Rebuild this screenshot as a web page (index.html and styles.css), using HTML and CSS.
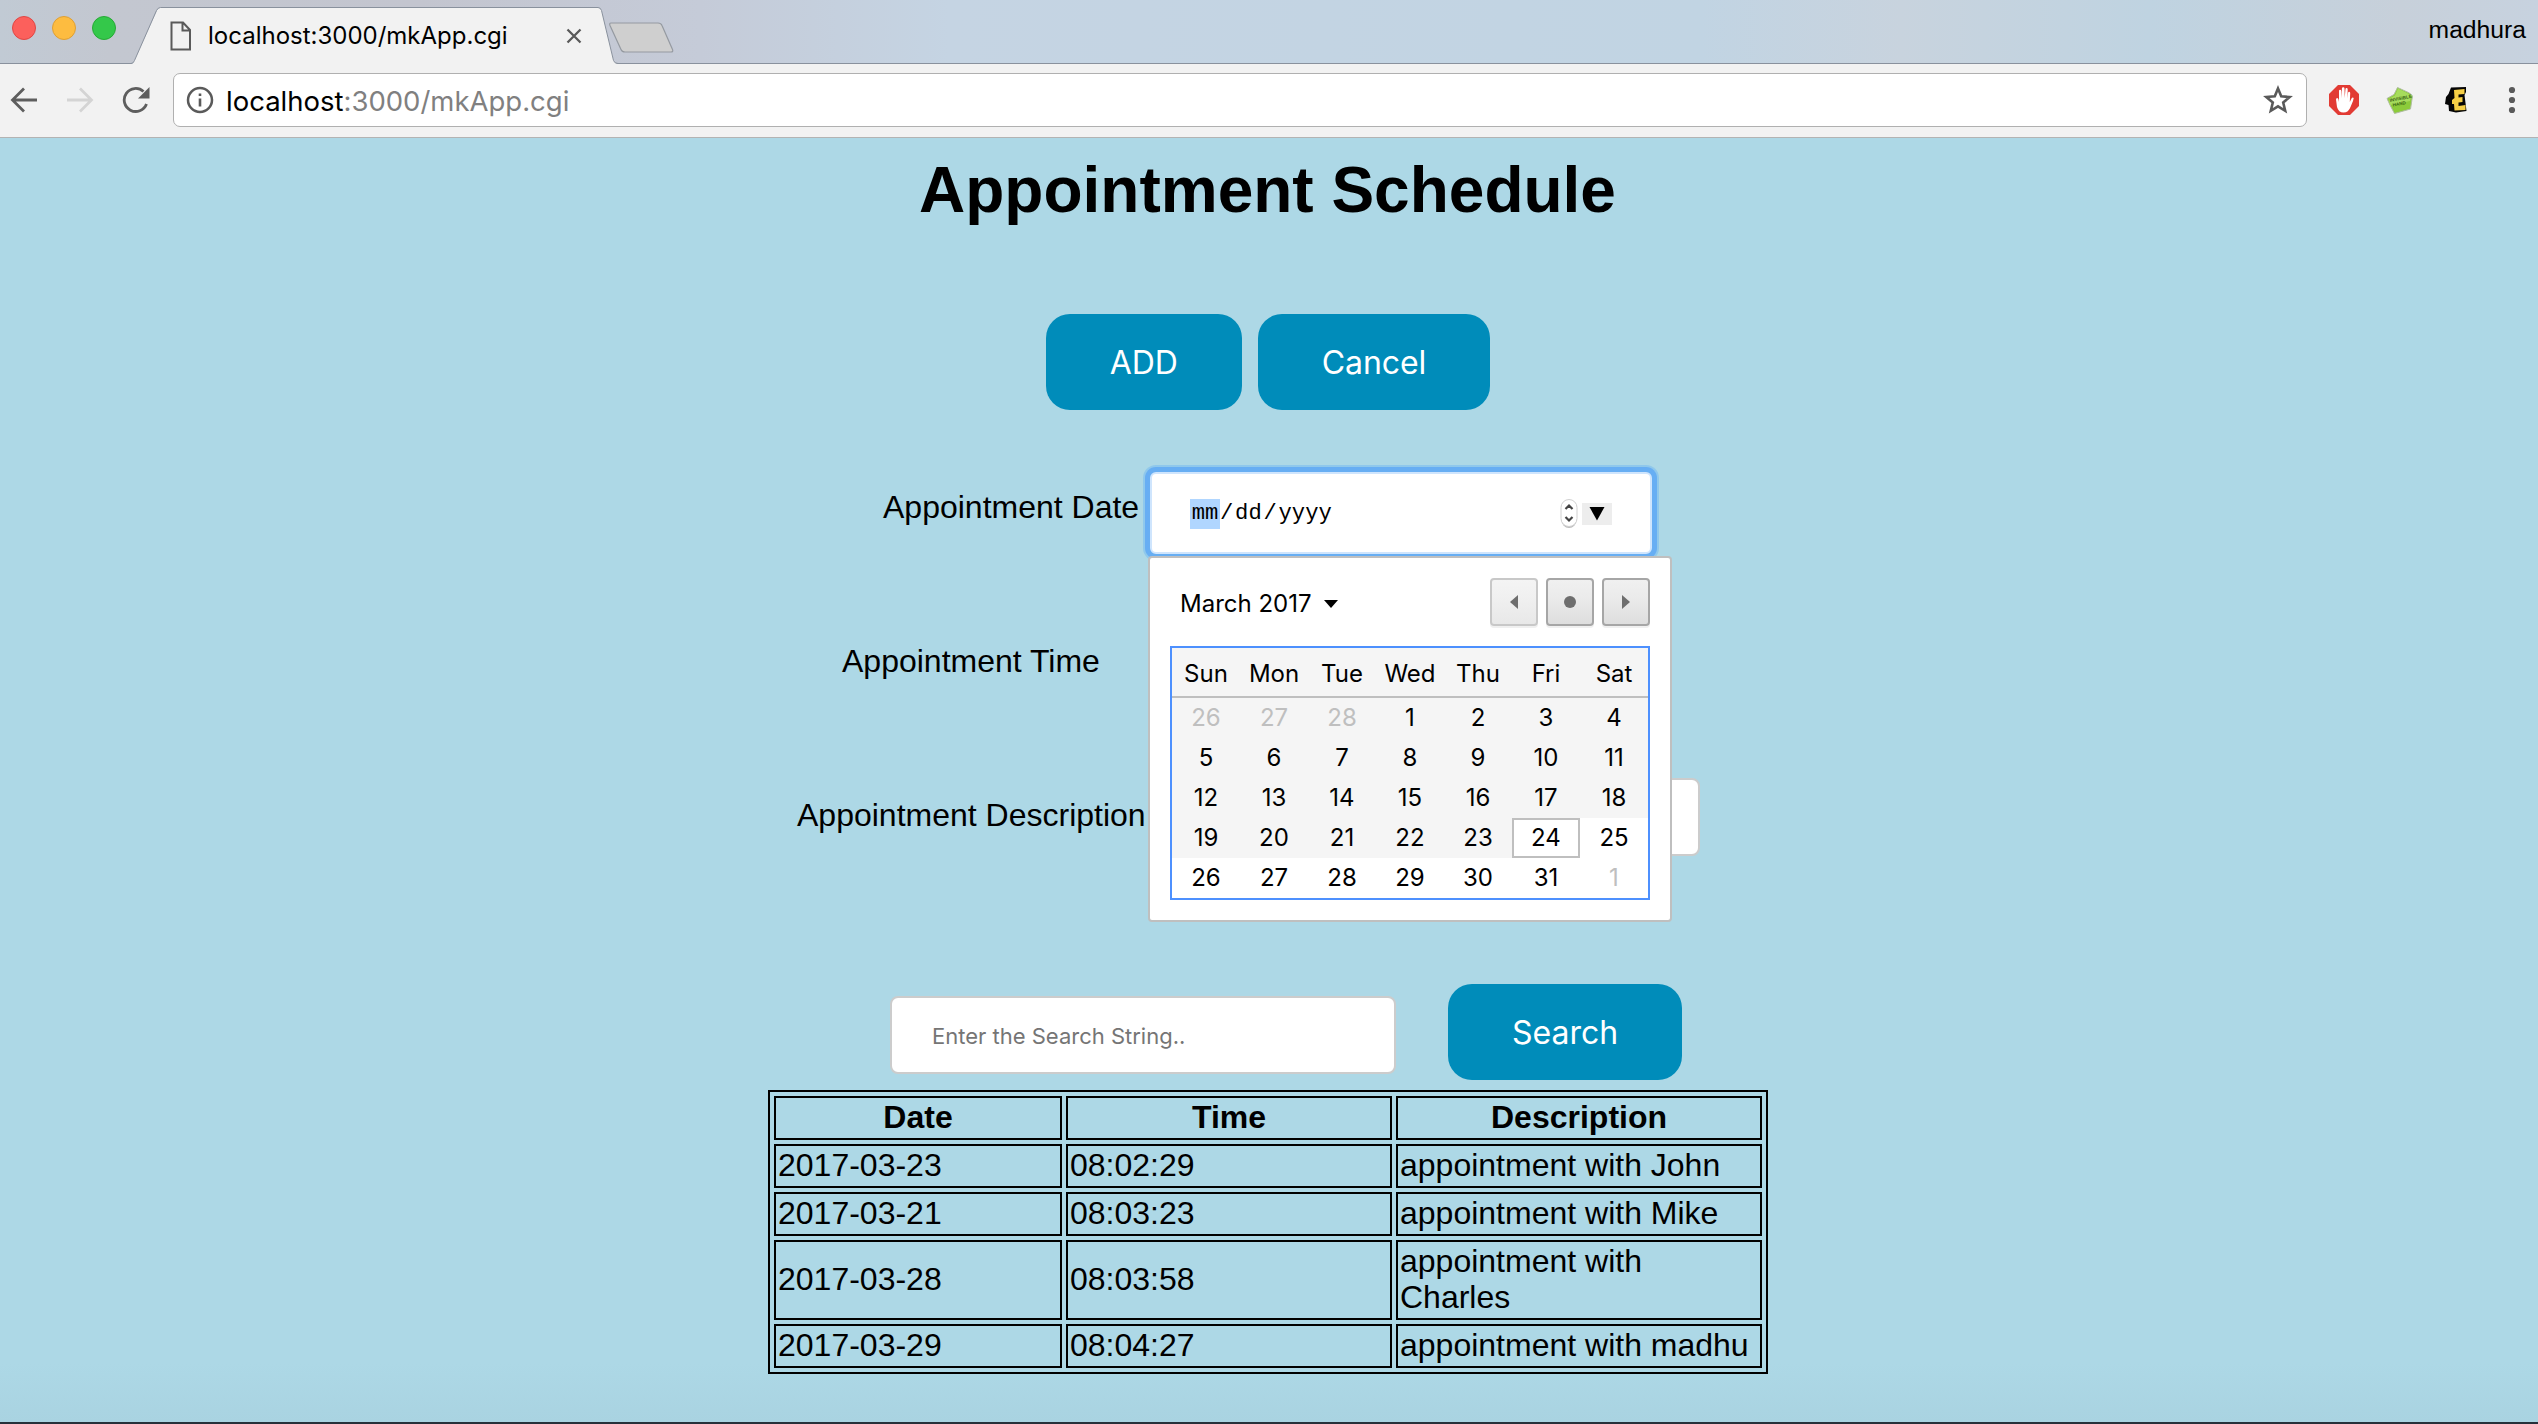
FILE: index.html
```
<!DOCTYPE html>
<html lang="en">
<head>
<meta charset="utf-8">
<title>localhost:3000/mkApp.cgi</title>
<link rel="stylesheet" href="styles.css">
</head>
<body>
<header class="browser">
  <div class="tabstrip">
    <div class="lights"><i class="light red"></i><i class="light yellow"></i><i class="light green"></i></div>
    <div class="tab">
      <svg class="tab-shape" width="488" height="64" viewBox="0 0 488 64"><path d="M0 64Q2.500 63.500 3.500 60.500L26 10.500Q27.500 7.500 30 7.500H466Q469 7.500 470.500 10.500L482.500 60Q483.500 63.500 487 64Z" fill="#f2f2f2"/><path d="M0 63.500Q2.500 63.500 3.500 60.500L25.500 10.500Q27 7.500 29.500 7.500H467Q469.500 7.500 470.500 10.500L482.500 60.500Q483.500 63.500 487 63.500" fill="none" stroke="#89919d"/></svg>
      <svg class="doc" width="22" height="30" viewBox="0 0 22 30" fill="none" stroke="#5a5a5a" stroke-width="2"><path d="M1.500 1.500H13L20 9V28.500H1.500ZM12.500 1.500V9.500H20"/></svg>
      <span class="tab-title">localhost:3000/mkApp.cgi</span>
      <svg class="close" width="16" height="16" viewBox="0 0 16 16" stroke="#5a5a5a" stroke-width="2.300"><path d="M1.500 1.500 14.500 14.500M14.500 1.500 1.500 14.500"/></svg>
    </div>
    <svg class="newtab" width="68" height="34" viewBox="0 0 68 34"><path d="M3 2H50Q53 2 54 4.500L64.500 28.500Q65.500 31 63 31H17Q14 31 13 28.500L2 4.500Q1 2 3 2Z" fill="#cfcfcf" stroke="#959aa1" stroke-width="1.200"/></svg>
    <span class="profile">madhura</span>
  </div>
  <div class="toolbar">
    <svg class="back" width="28" height="28" viewBox="0 0 28 28" fill="none" stroke="#5e5e5e" stroke-width="2.800"><path d="M27 14H3M14 2.500 2.500 14 14 25.500"/></svg>
    <svg class="forward" width="28" height="28" viewBox="0 0 28 28" fill="none" stroke="#d4d4d4" stroke-width="2.800"><path d="M1 14H25M14 2.500 25.500 14 14 25.500"/></svg>
    <svg class="reload" width="28" height="28" viewBox="0 0 28 28"><path d="M24.500 18A11.500 11.500 0 1 1 21.500 5.500" fill="none" stroke="#5e5e5e" stroke-width="2.800"/><path d="M27.500 1V12.500H16Z" fill="#5e5e5e"/></svg>
    <div class="omnibox">
      <svg width="28" height="28" viewBox="0 0 28 28"><circle cx="14" cy="14" r="12" fill="none" stroke="#5a5a5a" stroke-width="2.500"/><path d="M14 12.500V20.500M14 7.500V10" stroke="#5a5a5a" stroke-width="2.600"/></svg>
      <span class="url">localhost<span class="path">:3000/mkApp.cgi</span></span>
      <svg class="star" width="30" height="30" viewBox="0 0 30 30"><path d="M15 3.500 18.200 11.300 26.700 12 20.200 17.500 22.200 25.800 15 21.300 7.800 25.800 9.800 17.500 3.300 12 11.800 11.300Z" fill="none" stroke="#5a5a5a" stroke-width="2.600"/></svg>
    </div>
    <svg class="ext-block" width="30" height="30" viewBox="0 0 30 30"><path d="M9 0H21L30 9V21L21 30H9L0 21V9Z" fill="#e23b34"/><path d="M7 14.500Q7 13 8.200 13 9.200 13 9.500 14.500L10 17V6Q10 4.700 11.100 4.700 12.200 4.700 12.300 6L12.700 13 12.900 3.500Q13 2.200 14.200 2.200 15.400 2.200 15.500 3.500L15.700 13 16.500 4Q16.700 2.800 17.800 3 18.800 3.200 18.700 4.500L18.400 13.500 19 8Q19.300 6.500 20.300 6.700 21.300 7 21.200 8.200L20.800 17 22.500 13.500Q23.500 12 24.700 13L24 16 21.500 22Q19.500 27.500 14.500 27.500 9.500 27.500 8 22Z" fill="#fff"/></svg>
    <svg class="ext-hand" width="28" height="30" viewBox="0 0 28 30"><path d="M11.500 2.500 23.500 8 26.500 11 24.500 24 8.500 28.500 4.500 21 1 13.500 8 9.500Z" fill="#8ccb3a" stroke="#b0bda2" stroke-width="1"/><path d="M12 3.500 23 9 25 12 24 16 4 20 2.500 14 9 10.500Z" fill="#a6dc5c"/><text transform="translate(4 17) rotate(-11)" class="ext-label"><tspan x="0" y="0">INVISIBLE</tspan><tspan x="2" y="5">HAND</tspan></text></svg>
    <svg class="ext-e" width="24" height="28" viewBox="0 0 24 28"><path d="M7 1.500 22 1V6L20.500 9 22.500 25 12 26.500 5 25 4.500 19 1 18 2 11 4.500 8Z" fill="#050505"/><path d="M10 4 20.500 3V8L14.500 8.500V11.500L18.500 11V16L14.500 16.500V20L21.500 19V24L10.500 24.500 10 18H8V14L10.500 12Z" fill="#f6cf45"/></svg>
    <svg class="menu" width="8" height="28" viewBox="0 0 8 28" fill="#5a5a5a"><circle cx="4" cy="4" r="3.100"/><circle cx="4" cy="14" r="3.100"/><circle cx="4" cy="24" r="3.100"/></svg>
  </div>
</header>
<main class="page">
  <h1>Appointment Schedule</h1>
  <div class="actions"><button class="btn">ADD</button><button class="btn">Cancel</button></div>
  <form class="fields">
    <div class="field date-row">
      <label>Appointment Date</label>
      <div class="date-input">
        <span class="seg active">mm</span><span class="slash">/</span><span class="seg">dd</span><span class="slash">/</span><span class="seg">yyyy</span>
        <svg class="spinner" width="18" height="32" viewBox="0 0 18 32"><rect x="1.500" y="2.500" width="15" height="27.500" rx="7.500" fill="#bbb"/><rect x="1" y="1.500" width="16" height="27" rx="8" fill="#fff" stroke="#d0d0d0"/><path d="M5.500 11 9 7.500 12.500 11M5.500 19 9 22.500 12.500 19" fill="none" stroke="#444" stroke-width="2.200"/></svg>
        <span class="drop"><svg width="16" height="14" viewBox="0 0 16 14"><path d="M.5 0H15.500L8 13.500Z"/></svg></span>
        <div class="calendar">
          <div class="cal-head">
            <span class="month">March 2017</span>
            <svg class="caret" width="14" height="8" viewBox="0 0 14 8"><path d="M0 0H14L7 8Z"/></svg>
            <span class="nav faded"><svg width="8" height="14" viewBox="0 0 8 14"><path d="M8 0V14L0 7Z"/></svg></span>
            <span class="nav"><svg width="12" height="12" viewBox="0 0 12 12"><circle cx="6" cy="6" r="6"/></svg></span>
            <span class="nav"><svg width="8" height="14" viewBox="0 0 8 14"><path d="M0 0V14L8 7Z"/></svg></span>
          </div>
          <div class="cal-grid">
            <b>Sun</b><b>Mon</b><b>Tue</b><b>Wed</b><b>Thu</b><b>Fri</b><b>Sat</b>
            <i class="past other">26</i><i class="past other">27</i><i class="past other">28</i><i class="past">1</i><i class="past">2</i><i class="past">3</i><i class="past">4</i>
            <i class="past">5</i><i class="past">6</i><i class="past">7</i><i class="past">8</i><i class="past">9</i><i class="past">10</i><i class="past">11</i>
            <i class="past">12</i><i class="past">13</i><i class="past">14</i><i class="past">15</i><i class="past">16</i><i class="past">17</i><i class="past">18</i>
            <i class="past">19</i><i class="past">20</i><i class="past">21</i><i class="past">22</i><i class="past">23</i><i class="today">24</i><i>25</i>
            <i>26</i><i>27</i><i>28</i><i>29</i><i>30</i><i>31</i><i class="other">1</i>
          </div>
        </div>
      </div>
    </div>
    <div class="field time-row"><label>Appointment Time</label></div>
    <div class="field desc-row"><label>Appointment Description</label><div class="text-input"></div></div>
  </form>
  <div class="search">
    <input class="text-input" type="text" placeholder="Enter the Search String..">
    <button class="btn">Search</button>
  </div>
  <table class="list">
    <colgroup><col class="c-date"><col class="c-time"><col class="c-desc"></colgroup>
    <tr><th>Date</th><th>Time</th><th>Description</th></tr>
    <tr><td>2017-03-23</td><td>08:02:29</td><td>appointment with John</td></tr>
    <tr><td>2017-03-21</td><td>08:03:23</td><td>appointment with Mike</td></tr>
    <tr><td>2017-03-28</td><td>08:03:58</td><td>appointment with Charles</td></tr>
    <tr><td>2017-03-29</td><td>08:04:27</td><td>appointment with madhu</td></tr>
  </table>
</main>
</body>
</html>
```
FILE: styles.css
```
* { box-sizing: border-box; }
body {
  margin: 0;
  height: 1424px;
  overflow: hidden;
  display: flex;
  flex-direction: column;
  background: lightblue;
  color: #000;
  font: 32px/36px "Liberation Sans", Arial, sans-serif;
}
svg { display: block; flex: none; }

/* browser window chrome */
.browser { flex: none; font-family: Inter, sans-serif; }
.tabstrip {
  height: 64px;
  display: flex;
  align-items: flex-start;
  background: linear-gradient(90deg, #c1cad4 0, #c3c7d0 110px, #c3c5cf 420px, #c5cbd8 700px, #c5d4e3 950px, #c1d4e3 1700px, #c8d3de 1900px, #bfd3e1 2150px, #c7d0da 2400px, #c7d2df 2538px);
  box-shadow: inset 0 -1px #89919d;
}
.lights { display: flex; gap: 16px; padding: 16px 0 0 12px; width: 131px; }
.light { width: 24px; height: 24px; border-radius: 50%; border: 1px solid; }
.red { background: #fc605c; border-color: #df4744; }
.yellow { background: #fdbc40; border-color: #de9f34; }
.green { background: #34c84a; border-color: #27aa35; }
.tab {
  position: relative;
  width: 488px;
  height: 64px;
  display: flex;
  align-items: center;
  padding: 8px 0 0 39px;
}
.tab-shape { position: absolute; left: 0; top: 0; }
.doc, .tab-title, .close { position: relative; }
.tab-title { margin-left: 16px; width: 358px; font-size: 24px; line-height: 30px; }
.newtab { margin: 21px 0 0 -11px; }
.profile { margin: 12px 12px 0 auto; font: 24.700px/36px "Liberation Sans", Arial, sans-serif; }
.toolbar {
  height: 74px;
  display: flex;
  align-items: center;
  padding: 0 22px 1px 10px;
  background: #f2f2f2;
  border-bottom: 1px solid #b3b3b3;
}
.forward { margin-left: 28px; }
.reload { margin-left: 28px; }
.omnibox {
  margin-left: 23px;
  width: 2134px;
  height: 54px;
  display: flex;
  align-items: center;
  padding: 0 13px 0 12px;
  background: #fff;
  border: 1px solid #b0b0b0;
  border-radius: 7px;
}
.url { margin: 1px 0 0 12px; font-size: 27.500px; flex: 1; }
.path { color: #808080; }
.ext-block { margin-left: 22px; }
.ext-hand { margin-left: 27px; }
.ext-label { font: bold 4.600px "Liberation Sans", Arial, sans-serif; fill: #3c6414; }
.ext-e { margin-left: 30px; }
.menu { margin-left: 40px; }

/* page */
.page {
  flex: 1;
  width: 2538px;
  border-bottom: 2px solid #26303a;
  background: linear-gradient(#add8e6 0, #add8e6 1225px, #a9d3e1 1284px);
}
h1 { margin: 15px 0 0; padding-right: 3px; font-size: 64px; line-height: 74px; text-align: center; }
.actions { display: flex; justify-content: center; gap: 16px; margin: 87px 2px 0 0; }
.btn {
  flex: none;
  height: 96px;
  padding: 0 64px;
  border: 0;
  border-radius: 24px;
  background: #008cba;
  color: #fff;
  font: 32px Inter, sans-serif;
}
.actions .btn { letter-spacing: -.1px; }
.field { display: flex; height: 154px; }
.fields { height: 574px; }
.date-row { padding: 56px 0 0 883px; }
.time-row { padding: 56px 0 0 842px; }
.desc-row { padding: 56px 0 0 797px; }
.field label { margin-top: 23px; flex: none; }
.date-row label { width: 267px; }
.date-input {
  position: relative;
  width: 502px;
  height: 82px;
  display: flex;
  align-items: center;
  margin-top: 6px;
  padding: 2px 40px 0 38px;
  background: #fff;
  border: 2px solid #cfe5fd;
  border-radius: 6px;
  box-shadow: 0 0 0 5px #67aef3, 0 0 0 7px #8fc8ec;
  font: 22.200px/30px "Courier New", "Liberation Mono", monospace;
}
.seg { padding: 0 1.700px; }
.seg.active { background: #b0d6ff; }
.slash { width: 13.400px; }
.spinner { margin-left: auto; }
.drop { width: 30px; height: 22px; margin: 0 -2px 0 4px; display: flex; justify-content: center; align-items: center; background: #ededed; }
.text-input { background: #fff; border: 2px solid #ccc; border-radius: 8px; }
.desc-row .text-input { margin: 4px 0 0 5px; width: 549px; height: 78px; }

.calendar {
  position: absolute;
  left: -4px;
  top: 82px;
  width: 524px;
  height: 366px;
  padding: 20px;
  background: #fff;
  border: 2px solid #bfbfbf;
  border-radius: 4px;
  font: 24px/40px Inter, sans-serif;
}
.cal-head { display: flex; align-items: center; height: 48px; padding-left: 10px; }
.month { margin-top: 4px; }
.caret { margin: 3px auto 0 12px; }
.nav {
  width: 48px;
  height: 48px;
  margin-left: 8px;
  display: flex;
  align-items: center;
  justify-content: center;
  border: 2px solid #a6a6a6;
  border-radius: 4px;
  background: linear-gradient(#f0f0f0, #ebebeb 40%, #dedede);
  box-shadow: 0 2px #f0f0f0;
  fill: #6e6e6e;
}
.nav.faded { border-color: #c8c8c8; background: linear-gradient(#f4f4f4, #f0f0f0 40%, #e8e8e8); }
.cal-grid {
  display: grid;
  grid-template-columns: repeat(7, 68px);
  grid-template-rows: 50px repeat(5, 40px);
  margin-top: 20px;
  width: 480px;
  border: 2px solid #4d90fe;
  text-align: center;
}
.cal-grid b { font-weight: inherit; line-height: 52px; background: #f5f5f5; border-bottom: 2px solid #bfbfbf; }
.cal-grid i { font-style: normal; }
.cal-grid .past { background: #f5f5f5; }
.cal-grid .other { color: #bfbfbf; }
.cal-grid .today { border: 2px solid #bfbfbf; line-height: 36px; }

.search { display: flex; align-items: center; padding-left: 890px; height: 96px; }
.search .text-input {
  width: 506px;
  height: 78px;
  margin: 6px 52px 0 0;
  padding: 2px 40px 0;
  font: 22px Inter, sans-serif;
}
.search .text-input::placeholder { color: #757575; }
.list {
  width: 1000px;
  margin: 10px 0 0 768px;
  table-layout: fixed;
  border: 2px solid #000;
  border-spacing: 4px;
}
.list td, .list th { padding: 1px 2px 3px; border: 2px solid #000; }
.c-date { width: 288px; }
.c-time { width: 326px; }
```
